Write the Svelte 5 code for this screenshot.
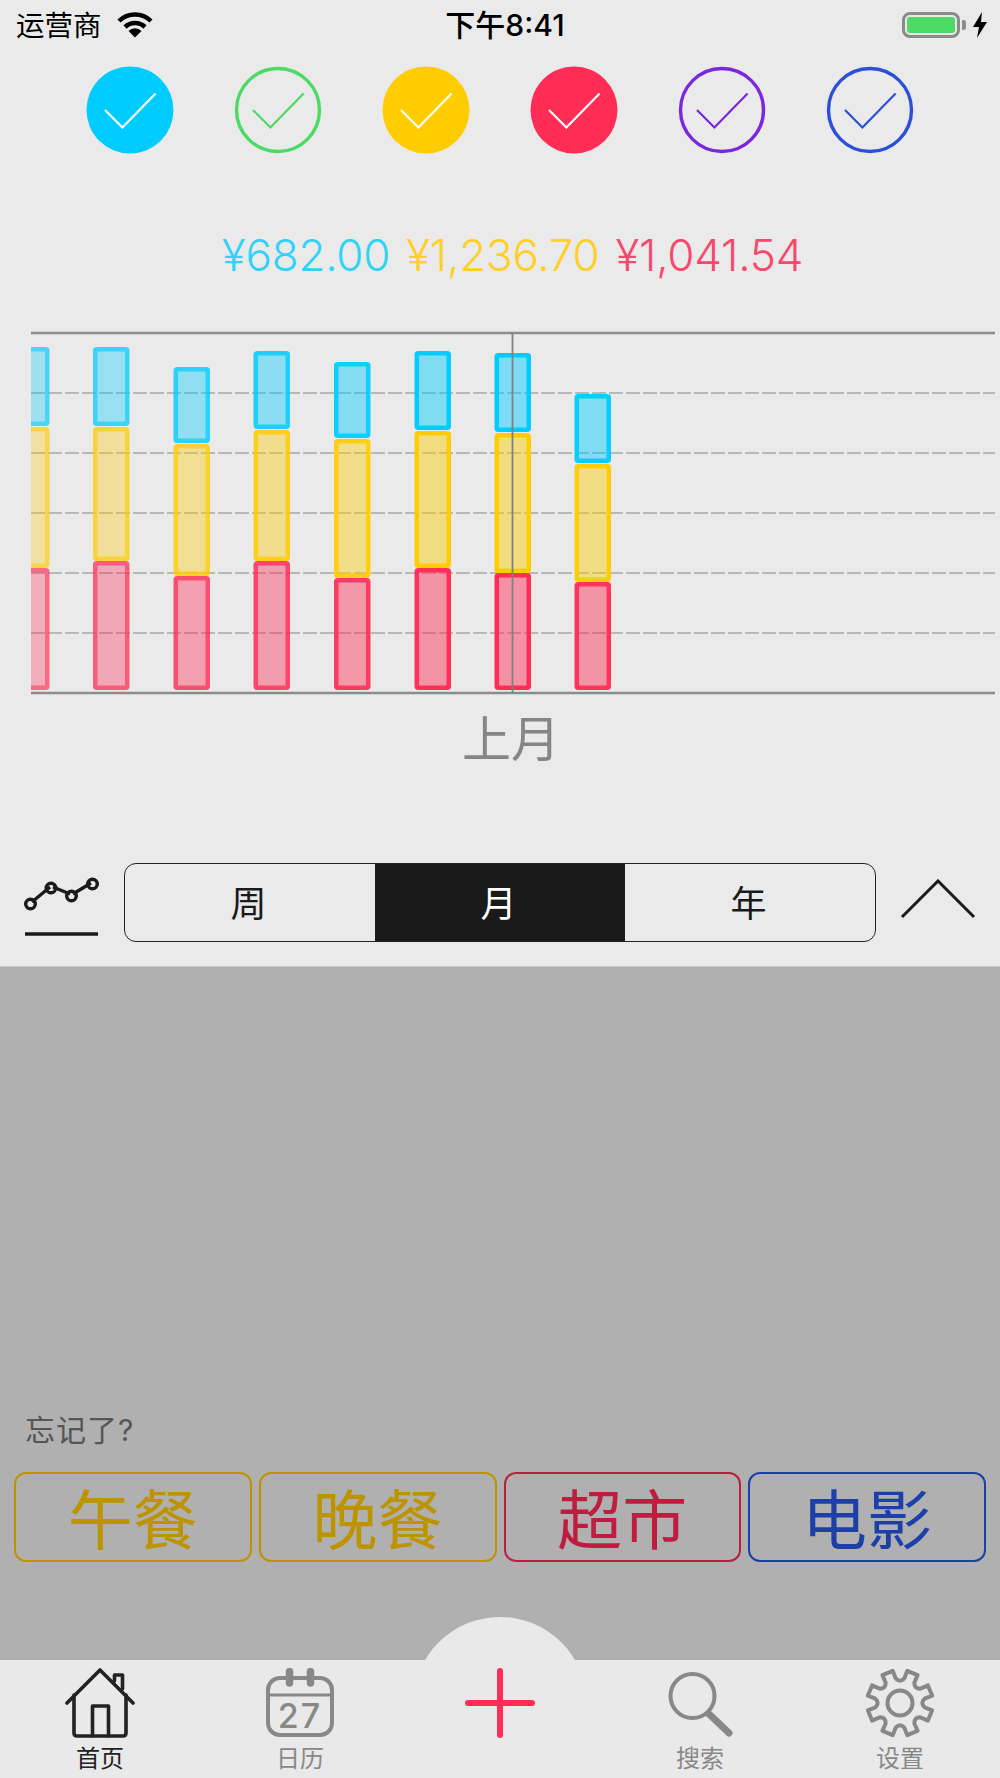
<script lang="ts">
	const filters = [
		{ color: '#00ccff', on: true },
		{ color: '#4cd964', on: false },
		{ color: '#ffcc00', on: true },
		{ color: '#ff2d55', on: true },
		{ color: '#7a28e0', on: false },
		{ color: '#2a50d8', on: false }
	];

	const amounts = [
		{ value: '¥682.00', color: '#2fd3f7' },
		{ value: '¥1,236.70', color: '#ffcf24' },
		{ value: '¥1,041.54', color: '#f5486c' }
	];

	// outer box of each stacked bar: [x, blue top, yellow top, red top, opacity]
	const bars = [
		[13, 347, 427, 568, 0.68],
		[93, 347, 427, 561, 0.75],
		[173.5, 367, 444, 576, 0.82],
		[253.5, 351, 430, 561, 0.87],
		[334, 362, 439, 578, 0.92],
		[414.5, 351, 431, 568, 0.98],
		[494.5, 353, 433, 573, 1],
		[574.5, 394, 464, 582, 0.96]
	];
	const barWidth = 36.5;
	const chartBottom = 690;

	const grid = [393, 453, 513, 573, 633];

	const quick = [
		{ label: '午餐', color: '#bd9400' },
		{ label: '晚餐', color: '#bd9400' },
		{ label: '超市', color: '#bf1c40' },
		{ label: '电影', color: '#1c3fa8' }
	];

	function gearPath() {
		const n = 8;
		const pt = (r: number, a: number) =>
			`${(35 + r * Math.cos(a)).toFixed(2)} ${(35 + r * Math.sin(a)).toFixed(2)}`;
		const step = (Math.PI * 2) / n;
		const half = 0.17;
		let d = '';
		for (let i = 0; i < n; i++) {
			const a = -Math.PI / 2 + step / 2 + i * step;
			d += `${i === 0 ? 'M' : 'L'}${pt(25, a - half - 0.05)} L${pt(33, a - half)} L${pt(33, a + half)} L${pt(25, a + half + 0.05)} `;
			d += `Q${pt(20, a + step / 2)} ${pt(25, a + step - half - 0.05)} `;
		}
		return d + 'Z';
	}
</script>

<div class="screen">
	<div class="top">
		<div class="status">
			<div class="carrier">
				<span>运营商</span>
				<svg width="36" height="26" viewBox="0 0 36 26">
					<path d="M2 9 A23 23 0 0 1 34 9" fill="none" stroke="#000" stroke-width="4.5" />
					<path d="M8 15 A14.5 14.5 0 0 1 28 15" fill="none" stroke="#000" stroke-width="4.5" />
					<path d="M11.5 19 A9 9 0 0 1 24.5 19 L18 25.5 Z" fill="#000" />
				</svg>
			</div>
			<div class="time">下午8:41</div>
			<div class="power">
				<div class="battery"><div class="level"></div></div>
				<div class="nib"></div>
				<svg class="bolt" width="16" height="26" viewBox="0 0 16 26">
					<path d="M10 0 L1 15 H7 L5 26 L15 10 H9 Z" fill="#000" />
				</svg>
			</div>
		</div>

		<div class="filters">
			{#each filters as f}
				<svg width="88" height="88" viewBox="0 0 88 88">
					<circle
						cx="44"
						cy="44"
						r={f.on ? 43.5 : 41.5}
						fill={f.on ? f.color : 'none'}
						stroke={f.on ? 'none' : f.color}
						stroke-width="3.4"
					/>
					<path
						d="M19 44 L36.4 61.5 L69.6 27.5"
						fill="none"
						stroke={f.on ? '#fff' : f.color}
						stroke-width="2.2"
					/>
				</svg>
			{/each}
		</div>

		<div class="amounts">
			{#each amounts as a}
				<span style="color: {a.color}">{a.value}</span>
			{/each}
		</div>

		<svg class="chart" width="1000" height="370" viewBox="0 330 1000 370">
			<defs>
				<clipPath id="plot"><rect x="31" y="330" width="969" height="370" /></clipPath>
			</defs>
			{#each grid as y}
				<line x1="31" x2="995" y1={y} y2={y} stroke="#a8a8a8" stroke-width="1.6" stroke-dasharray="14 3" />
			{/each}
			<line x1="31" x2="995" y1="333" y2="333" stroke="#8c8c8c" stroke-width="2.4" />
			<line x1="31" x2="995" y1="693" y2="693" stroke="#8c8c8c" stroke-width="2.4" />
			<g clip-path="url(#plot)">
				{#each bars as [x, blue, yellow, red, o]}
					<g opacity={o}>
						<rect x={x + 2.25} y={blue + 2.25} width={barWidth - 4.5} height={yellow - blue - 5.5} rx="1.5" fill="#00ccff" fill-opacity="0.47" stroke="#00ccff" stroke-width="4.5" />
						<rect x={x + 2.25} y={yellow + 2.25} width={barWidth - 4.5} height={red - yellow - 4.5} rx="1.5" fill="#ffcc00" fill-opacity="0.45" stroke="#ffcc00" stroke-width="4.5" />
						<rect x={x + 2.25} y={red + 2.25} width={barWidth - 4.5} height={chartBottom - red - 4.5} rx="1.5" fill="#ff2d55" fill-opacity="0.47" stroke="#ff2d55" stroke-width="4.5" />
					</g>
				{/each}
			</g>
			<line x1="512.5" x2="512.5" y1="333" y2="693" stroke="#808080" stroke-width="1.8" />
		</svg>

		<div class="period">上月</div>

		<div class="toolbar">
			<svg class="trend" width="76" height="66" viewBox="0 0 76 66">
				<path d="M8 28 L26 13 M29 13 L46 20 M49 20 L67 9" fill="none" stroke="#1a1a1a" stroke-width="3.4" />
				<circle cx="6.5" cy="30" r="4.8" fill="none" stroke="#1a1a1a" stroke-width="3.4" />
				<circle cx="27" cy="14" r="4.8" fill="none" stroke="#1a1a1a" stroke-width="3.4" />
				<circle cx="47.5" cy="22" r="4.8" fill="none" stroke="#1a1a1a" stroke-width="3.4" />
				<circle cx="68.5" cy="10" r="4.8" fill="none" stroke="#1a1a1a" stroke-width="3.4" />
				<line x1="1" x2="74" y1="60" y2="60" stroke="#1a1a1a" stroke-width="3.4" />
			</svg>
			<div class="segments">
				<div>周</div>
				<div class="active">月</div>
				<div>年</div>
			</div>
			<svg class="chevron" width="76" height="40" viewBox="0 0 76 40">
				<path d="M2 38 L38 2 L74 38" fill="none" stroke="#1a1a1a" stroke-width="3" />
			</svg>
		</div>
	</div>

	<div class="dim">
		<div class="hint">忘记了?</div>
		<div class="quick">
			{#each quick as q}
				<div class="chip" style="color: {q.color}; border-color: {q.color}">{q.label}</div>
			{/each}
		</div>
	</div>

	<div class="tabs">
		<div class="bump"></div>
		<div class="tab current">
			<svg width="70" height="70" viewBox="0 0 70 70" fill="none" stroke="currentColor" stroke-width="3.6" stroke-linejoin="round" stroke-linecap="round">
				<path d="M2 35 L35 2 L68 35" />
				<path d="M9 27 V65 Q9 68 12 68 H58 Q61 68 61 65 V27" />
				<path d="M27.5 68 V38 H43.5 V68" />
				<path d="M49.5 13 V7 H57.5 V21" />
			</svg>
			<span>首页</span>
		</div>
		<div class="tab">
			<svg width="70" height="70" viewBox="0 0 70 70" fill="none" stroke="currentColor">
				<rect x="3" y="10" width="64" height="57" rx="12" stroke-width="4" />
				<line x1="3" x2="67" y1="27" y2="27" stroke-width="3" />
				<line x1="24.5" x2="24.5" y1="3.5" y2="15" stroke-width="7.5" stroke-linecap="round" />
				<line x1="45.5" x2="45.5" y1="3.5" y2="15" stroke-width="7.5" stroke-linecap="round" />
				<text x="35" y="60" text-anchor="middle" class="day">27</text>
			</svg>
			<span>日历</span>
		</div>
		<div class="tab add">
			<svg width="70" height="70" viewBox="0 0 70 70" stroke="#ff2d55" stroke-width="6" stroke-linecap="round">
				<line x1="35" x2="35" y1="3" y2="67" />
				<line x1="3" x2="67" y1="35" y2="35" />
			</svg>
		</div>
		<div class="tab">
			<svg width="70" height="70" viewBox="0 0 70 70" fill="none" stroke="currentColor">
				<circle cx="27.5" cy="28" r="22" stroke-width="4" />
				<line x1="44" y1="46" x2="64" y2="65" stroke-width="7" stroke-linecap="round" />
			</svg>
			<span>搜索</span>
		</div>
		<div class="tab">
			<svg width="70" height="70" viewBox="0 0 70 70" fill="none" stroke="currentColor" stroke-width="4" stroke-linejoin="round">
				<path d={gearPath()} />
				<circle cx="35" cy="35" r="12.5" />
			</svg>
			<span>设置</span>
		</div>
	</div>
</div>

<style>
	:global(body) {
		background: #eaeaea;
	}

	.screen {
		width: 1000px;
		height: 1778px;
		display: flex;
		flex-direction: column;
		overflow: hidden;
		font-family: Inter, "Noto Sans CJK SC", sans-serif;
		color: #000;
	}

	.top {
		height: 967px;
		flex: none;
		box-sizing: border-box;
		border-bottom: 1px solid #c6c6c6;
		background: #eaeaea;
	}

	.status {
		height: 50px;
		padding: 0 12px 0 16px;
		display: grid;
		grid-template-columns: 1fr auto 1fr;
		align-items: center;
		font-size: 28.5px;
	}

	.carrier {
		display: flex;
		align-items: center;
		gap: 15px;
	}

	.carrier span {
		margin-top: -3px;
	}

	.time {
		font-size: 30px;
		font-weight: 500;
		margin-left: 6px;
		margin-top: -4px;
	}

	.power {
		display: flex;
		align-items: center;
		justify-content: flex-end;
	}

	.battery {
		width: 58px;
		height: 26px;
		box-sizing: border-box;
		border: 3px solid #8a8a8a;
		border-radius: 8px;
		padding: 2px;
	}

	.level {
		height: 100%;
		background: #4cd964;
		border-radius: 3px;
	}

	.nib {
		width: 4px;
		height: 10px;
		margin-left: 2px;
		background: #8a8a8a;
		border-radius: 0 3px 3px 0;
	}

	.bolt {
		margin-left: 6px;
	}

	.filters {
		margin-top: 16px;
		padding: 0 86px;
		display: flex;
		justify-content: space-between;
		height: 88px;
	}

	.amounts {
		margin-top: 78px;
		height: 48px;
		display: flex;
		justify-content: center;
		gap: 16px;
		font-size: 44px;
		font-weight: 350;
		letter-spacing: -0.2px;
		line-height: 46px;
		padding-left: 25px;
	}

	.chart {
		display: block;
		margin-top: 50px;
	}

	.period {
		margin-top: 10px;
		height: 60px;
		line-height: 60px;
		text-align: center;
		font-size: 49px;
		color: #858585;
		padding-left: 22px;
	}

	.toolbar {
		margin-top: 93px;
		padding: 0 24px;
		display: flex;
		align-items: center;
		gap: 24px;
	}

	.trend {
		margin-top: 8px;
		flex: none;
	}

	.chevron {
		flex: none;
		margin-top: -8px;
	}

	.segments {
		flex: 1;
		height: 79px;
		box-sizing: border-box;
		border: 1.5px solid #222;
		border-radius: 12px;
		overflow: hidden;
		display: grid;
		grid-template-columns: 1fr 1fr 1fr;
		font-size: 36px;
		color: #1a1a1a;
	}

	.segments div {
		display: flex;
		align-items: center;
		justify-content: center;
		padding: 0 3px 4px 0;
	}

	.segments .active {
		background: #1a1a1a;
		color: #fff;
	}

	.dim {
		flex: 1;
		background: #b0b0b0;
		display: flex;
		flex-direction: column;
		justify-content: flex-end;
		padding: 0 14px 98px;
	}

	.hint {
		font-size: 30px;
		letter-spacing: 1px;
		line-height: 40px;
		color: #555;
		padding-left: 11px;
		margin-bottom: 22px;
	}

	.quick {
		display: grid;
		grid-template-columns: repeat(4, 1fr);
		gap: 7px;
	}

	.chip {
		height: 90px;
		box-sizing: border-box;
		border: 2px solid;
		border-radius: 12px;
		display: flex;
		align-items: center;
		justify-content: center;
		font-size: 65px;
		padding-bottom: 3px;
	}

	.tabs {
		position: relative;
		height: 118px;
		flex: none;
		background: #e9e9e9;
		display: grid;
		grid-template-columns: repeat(5, 1fr);
	}

	.bump {
		position: absolute;
		left: 413px;
		top: -43px;
		width: 174px;
		height: 174px;
		border-radius: 50%;
		background: #e9e9e9;
	}

	.tab {
		position: relative;
		padding-top: 8px;
		display: flex;
		flex-direction: column;
		align-items: center;
		color: #888;
		height: 110px;
	}

	.tab svg {
		display: block;
	}

	.tab span {
		margin-top: 2px;
		font-size: 24px;
		line-height: 38px;
	}

	.tab.current {
		color: #222;
	}

	.day {
		font-family: Inter, sans-serif;
		font-size: 34px;
		font-weight: 500;
		letter-spacing: 2px;
		fill: currentColor;
		stroke: none;
	}
</style>
